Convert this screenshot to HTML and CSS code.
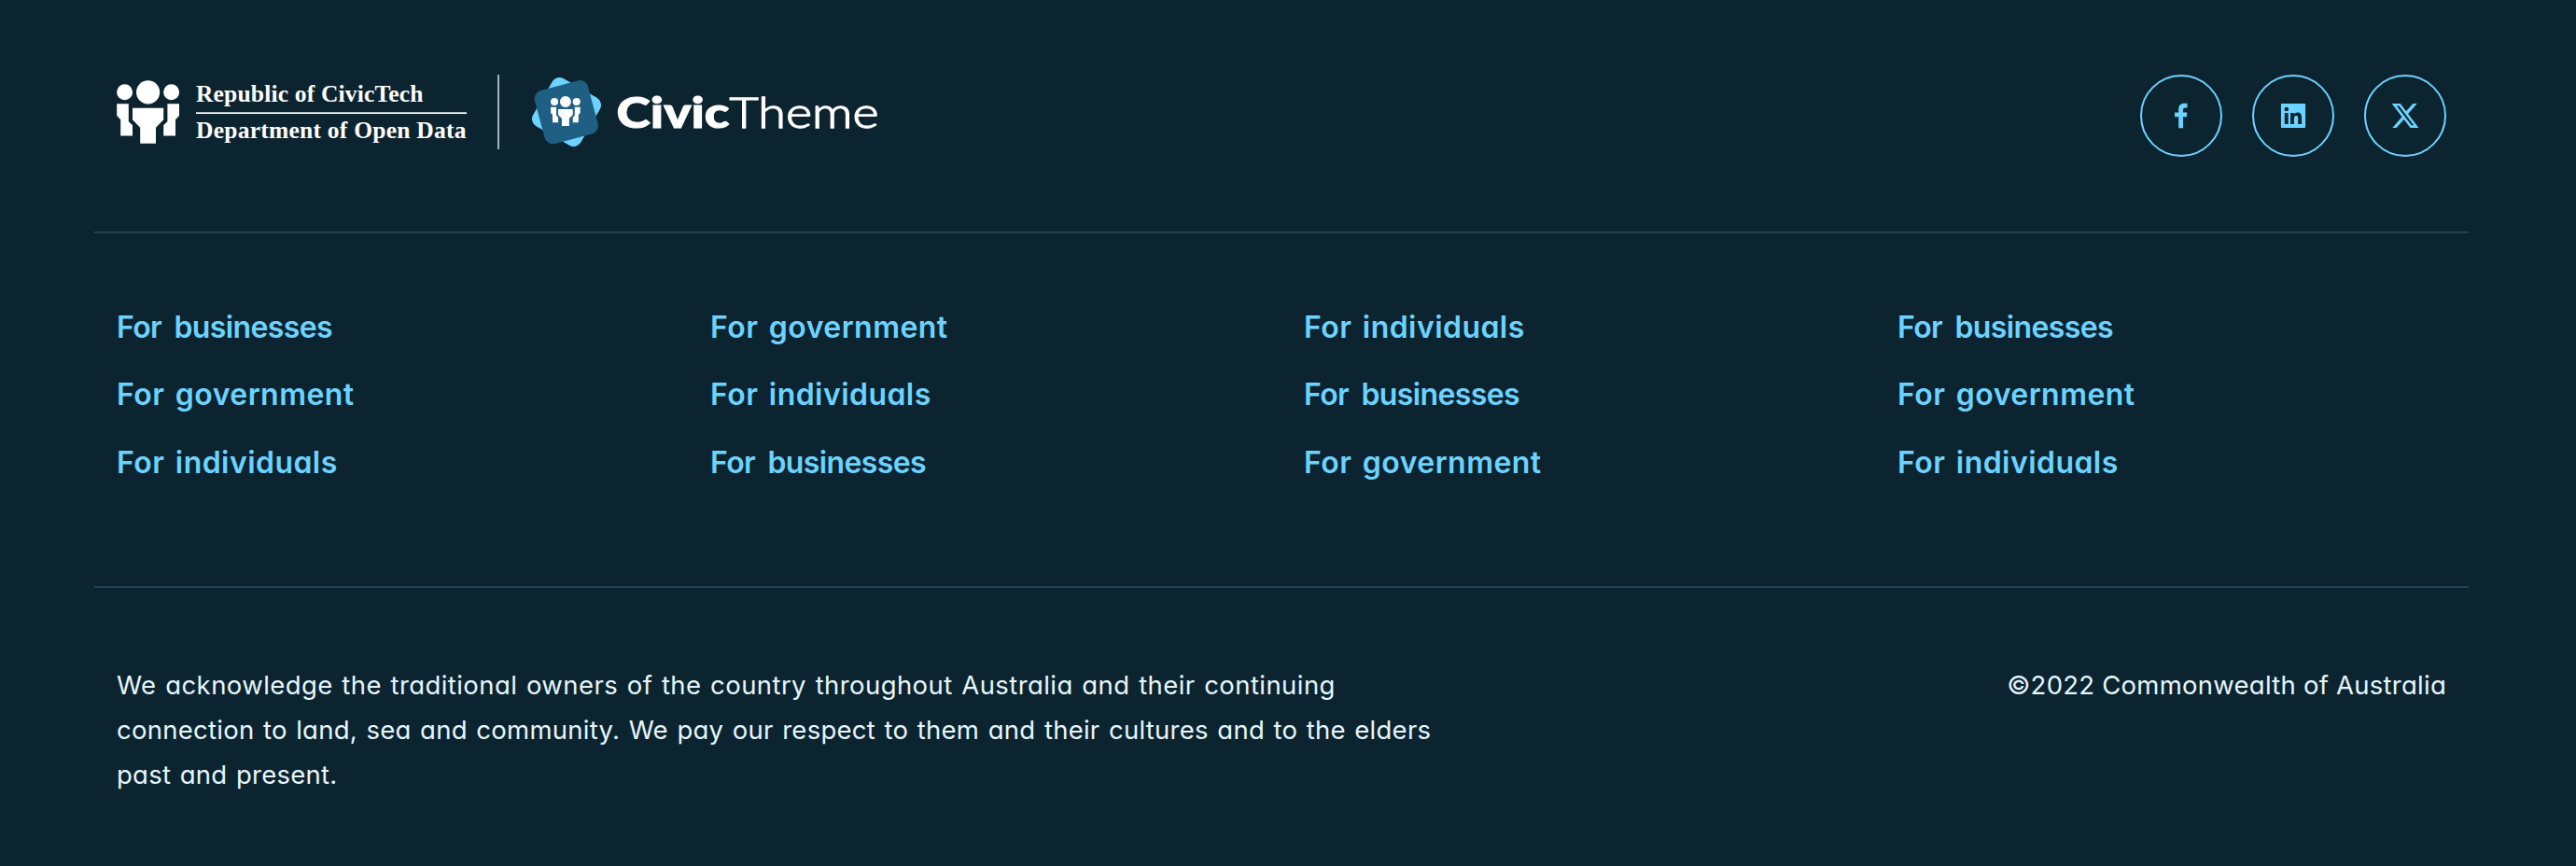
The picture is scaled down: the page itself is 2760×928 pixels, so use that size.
FILE: index.html
```html
<!DOCTYPE html>
<html lang="en">
<head>
<meta charset="utf-8">
<title>CivicTheme footer</title>
<link rel="stylesheet" href="styles.css">
</head>
<body>
<footer class="footer">
  <div class="footer-top">
    <div class="logos">
      <svg class="logo-primary" width="376" height="80" viewBox="0 0 376 80" role="img" aria-label="Republic of CivicTech, Department of Open Data">
        <defs>
          <g id="people">
            <circle cx="8.6" cy="18.7" r="8.5"/>
            <circle cx="33.6" cy="18.8" r="12.6"/>
            <circle cx="58.6" cy="18.7" r="8.5"/>
            <path d="M.2 31.2h12.6v19L17 54.3v11.3H4.2V48.3l-4-4.2z"/>
            <path d="M67 31.2H54.4v19l-4.2 4.1v11.3H63V48.3l4-4.2z"/>
            <path d="M17 35.7h33.2v12.6L42 56.7v17H25.2v-17L17 48.3z"/>
          </g>
        </defs>
        <use href="#people" fill="#fff"/>
        <text class="crest-text" x="85" y="29" textLength="243.5">Republic of CivicTech</text>
        <rect x="85" y="40.3" width="290" height="1.7" fill="#fff"/>
        <text class="crest-text" x="85" y="68" textLength="289.5">Department of Open Data</text>
      </svg>
      <span class="logo-divider"></span>
      <svg class="logo-secondary" width="380" height="80" viewBox="0 0 380 80" role="img" aria-label="CivicTheme">
        <rect x="12.5" y="10.5" width="59" height="59" rx="9" fill="#6cd3ff" transform="rotate(30 42 40)"/>
        <rect x="12.3" y="10.7" width="59" height="59" rx="9" fill="#1f5f83" transform="rotate(-15 41.8 40.2)"/>
        <use href="#people" fill="#fff" transform="translate(25 20.1) scale(.473)"/>
        <text class="brand brand-bold" x="95.5" y="56.7" textLength="121" lengthAdjust="spacingAndGlyphs">Civic</text>
        <text class="brand brand-light" x="216.5" y="56.7" textLength="160" lengthAdjust="spacingAndGlyphs">Theme</text>
      </svg>
    </div>
    <div class="social">
      <a class="social-link" aria-label="Facebook"><svg width="32" height="32" viewBox="0 0 24 24"><path d="M13.5 22v-9.1h2.8l.5-3.5h-3.3V7.2c0-1 .5-1.6 1.8-1.6h1.6V2.2c-.3 0-1.3-.1-2.4-.1-2.9 0-4.6 1.7-4.6 4.6v2.7H6.8v3.5h3.1V22z"/></svg></a>
      <a class="social-link" aria-label="LinkedIn"><svg width="32" height="32" viewBox="0 0 24 24"><path fill-rule="evenodd" d="M3 2.2h18c.5 0 .8.4.8.8v18c0 .5-.4.8-.8.8H3c-.5 0-.8-.4-.8-.8V3c0-.5.4-.8.8-.8zM5.1 9.7v9.1H8V9.7zM6.6 5.1a1.7 1.7 0 1 0 0 3.4 1.7 1.7 0 0 0 0-3.4zM9.8 9.7v9.1h2.9v-4.5c0-1.2.2-2.3 1.7-2.3s1.5 1.4 1.5 2.4v4.4h2.9v-5c0-2.5-.5-4.4-3.4-4.4-1.4 0-2.3.8-2.7 1.5v-1.2z"/></svg></a>
      <a class="social-link" aria-label="X"><svg width="32" height="32" viewBox="0 0 24 24"><path d="M18.244 2.25h3.308l-7.227 8.26 8.502 11.24H16.17l-5.214-6.817L4.99 21.75H1.68l7.73-8.835L1.254 2.25H8.08l4.713 6.231zm-1.161 17.52h1.833L7.084 4.126H5.117z"/></svg></a>
    </div>
  </div>
  <nav class="footer-nav">
    <ul class="links"><li class="biz">For businesses</li><li>For government</li><li>For individuals</li></ul>
    <ul class="links"><li>For government</li><li>For individuals</li><li class="biz">For businesses</li></ul>
    <ul class="links"><li>For individuals</li><li class="biz">For businesses</li><li>For government</li></ul>
    <ul class="links"><li class="biz">For businesses</li><li>For government</li><li>For individuals</li></ul>
  </nav>
  <div class="footer-bottom">
    <p class="acknowledgement">
      <span class="line line-first">We acknowledge the traditional owners of the country throughout Australia and their continuing</span>
      <span class="line">connection to land, sea and community. We pay our respect to them and their cultures and to the elders</span>
      <span class="line">past and present.</span>
    </p>
    <p class="copyright">©2022 Commonwealth of Australia</p>
  </div>
</footer>
</body>
</html>
```
FILE: styles.css
```css
* { box-sizing: border-box; }
body {
  margin: 0;
  background: #0c2430;
  font-family: Inter, "Open Sans", sans-serif;
  font-feature-settings: "cv11" 1;
}
.footer {
  height: 928px;
  padding: 80px 115px 0 101px;
}
.footer-top {
  display: flex;
  justify-content: space-between;
  height: 170px;
  padding: 0 24px;
  border-bottom: 2px solid #1f4354;
}
.logos { display: flex; align-items: flex-start; }
.logo-primary, .logo-secondary { display: block; }
.logo-divider {
  width: 2px;
  height: 80px;
  margin: 0 30px 0 32px;
  background: #9fb3bb;
}
.crest-text {
  font: bold 25.5px "Liberation Serif", serif;
  fill: #fff;
}
.brand { font-family: Lato, sans-serif; font-size: 46px; fill: #fff; }
.brand-bold { font-weight: 900; stroke: #fff; stroke-width: 1px; }
.brand-light { font-weight: 300; stroke: #fff; stroke-width: 1.3px; }
.social { display: flex; gap: 32px; }
.social-link {
  display: flex;
  align-items: center;
  justify-content: center;
  width: 88px;
  height: 88px;
  border: 2px solid #6cd3ff;
  border-radius: 50%;
}
.social-link svg { fill: #6cd3ff; }
.footer-nav {
  display: grid;
  grid-template-columns: repeat(4, 1fr);
  height: 380px;
  padding-top: 65px;
  border-bottom: 2px solid #1f4354;
}
.links {
  margin: 0;
  padding: 0 24px;
  list-style: none;
  color: #6cd3ff;
  font-size: 32px;
  font-weight: 600;
  line-height: 72.4px;
  letter-spacing: .45px;
  word-spacing: 3px;
}
.biz { letter-spacing: -.63px; word-spacing: 6px; }
.footer-bottom {
  display: flex;
  justify-content: space-between;
  padding: 80px 24px 0;
  color: #e6f6fc;
  font-size: 27.5px;
  line-height: 48px;
  letter-spacing: .26px;
  word-spacing: 1.5px;
}
.acknowledgement, .copyright { margin: 0; white-space: nowrap; }
.copyright { letter-spacing: .25px; word-spacing: 0; }
.line { display: block; width: max-content; }
.line-first { letter-spacing: .42px; }
```
